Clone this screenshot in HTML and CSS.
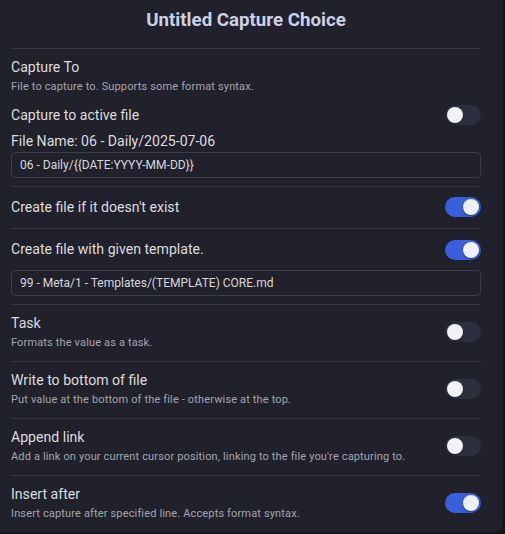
FILE: index.html
```html
<!DOCTYPE html>
<html>
<head>
<meta charset="utf-8">
<link rel="stylesheet" href="styles.css">
</head>
<body>
<div class="panel">
  <h1 class="title">Untitled Capture Choice</h1>
  <div class="section first">
    <div class="name">Capture To</div>
    <div class="desc">File to capture to. Supports some format syntax.</div>
    <div class="row inline">
      <div class="name">Capture to active file</div>
      <div class="toggle"></div>
    </div>
    <div class="name filename">File Name: 06 - Daily/2025-07-06</div>
    <div class="input">06 - Daily/{{DATE:YYYY-MM-DD}}</div>
  </div>
  <div class="section row single">
    <div class="name">Create file if it doesn't exist</div>
    <div class="toggle on"></div>
  </div>
  <div class="section tpl">
    <div class="row inline">
      <div class="name">Create file with given template.</div>
      <div class="toggle on"></div>
    </div>
    <div class="input">99 - Meta/1 - Templates/(TEMPLATE) CORE.md</div>
  </div>
  <div class="section row double">
    <div class="info">
      <div class="name">Task</div>
      <div class="desc">Formats the value as a task.</div>
    </div>
    <div class="toggle"></div>
  </div>
  <div class="section row double">
    <div class="info">
      <div class="name">Write to bottom of file</div>
      <div class="desc">Put value at the bottom of the file - otherwise at the top.</div>
    </div>
    <div class="toggle"></div>
  </div>
  <div class="section row double">
    <div class="info">
      <div class="name">Append link</div>
      <div class="desc">Add a link on your current cursor position, linking to the file you're capturing to.</div>
    </div>
    <div class="toggle"></div>
  </div>
  <div class="section row double last">
    <div class="info">
      <div class="name">Insert after</div>
      <div class="desc">Insert capture after specified line. Accepts format syntax.</div>
    </div>
    <div class="toggle on"></div>
  </div>
</div>
</body>
</html>
```
FILE: styles.css
```css
html, body {
  margin: 0;
  padding: 0;
  background: #141419;
}
body {
  font-family: Roboto, "Liberation Sans", sans-serif;
  width: 505px;
  height: 534px;
  overflow: hidden;
}
.panel {
  width: 503px;
  height: 532px;
  box-sizing: border-box;
  background: #20212b;
  border-bottom-right-radius: 9px;
  padding: 0 22px 0 11px;
  overflow: hidden;
}
.title {
  margin: 0;
  height: 49px;
  line-height: 40px;
  text-align: center;
  font-size: 18.7px;
  font-weight: 700;
  color: #cdd1e8;
  box-sizing: border-box;
  border-bottom: 1px solid #343641;
}
.section {
  border-bottom: 1px solid #343641;
}
.section.last {
  border-bottom: none;
}
.name {
  font-size: 14.1px;
  line-height: 18px;
  color: #dcdcdf;
}
.desc {
  font-size: 11px;
  letter-spacing: 0.15px;
  line-height: 14px;
  color: #a4a5ae;
  margin-top: 4px;
}
.row {
  display: flex;
  align-items: center;
  justify-content: space-between;
}
.first {
  padding: 9px 0 8px;
}
.first .inline {
  margin-top: 11px;
}
.filename {
  margin-top: 7px;
}
.input {
  height: 26px;
  box-sizing: border-box;
  border: 1px solid #3a3c48;
  border-radius: 4px;
  font-size: 12px;
  line-height: 24px;
  padding-left: 8px;
  color: #d8d8dc;
  margin-top: 2px;
}
.single {
  padding: 10px 0 11px;
}
.tpl {
  padding: 11px 0 8px;
}
.tpl .name {
  margin-top: -3px;
}
.tpl .input {
  margin-top: 10px;
}
.double {
  padding: 9px 0 11px;
}
.toggle {
  position: relative;
  width: 36px;
  height: 20px;
  border-radius: 10px;
  background: #2c2f3e;
  flex: none;
}
.toggle::after {
  content: "";
  position: absolute;
  top: 2px;
  left: 2px;
  width: 16px;
  height: 16px;
  border-radius: 50%;
  background: #f2f2f5;
  box-shadow: 0 1px 2px rgba(0,0,0,0.4);
}
.toggle.on {
  background: #3a5fdc;
}
.toggle.on::after {
  left: 18px;
  background: #eef0fb;
}
```
